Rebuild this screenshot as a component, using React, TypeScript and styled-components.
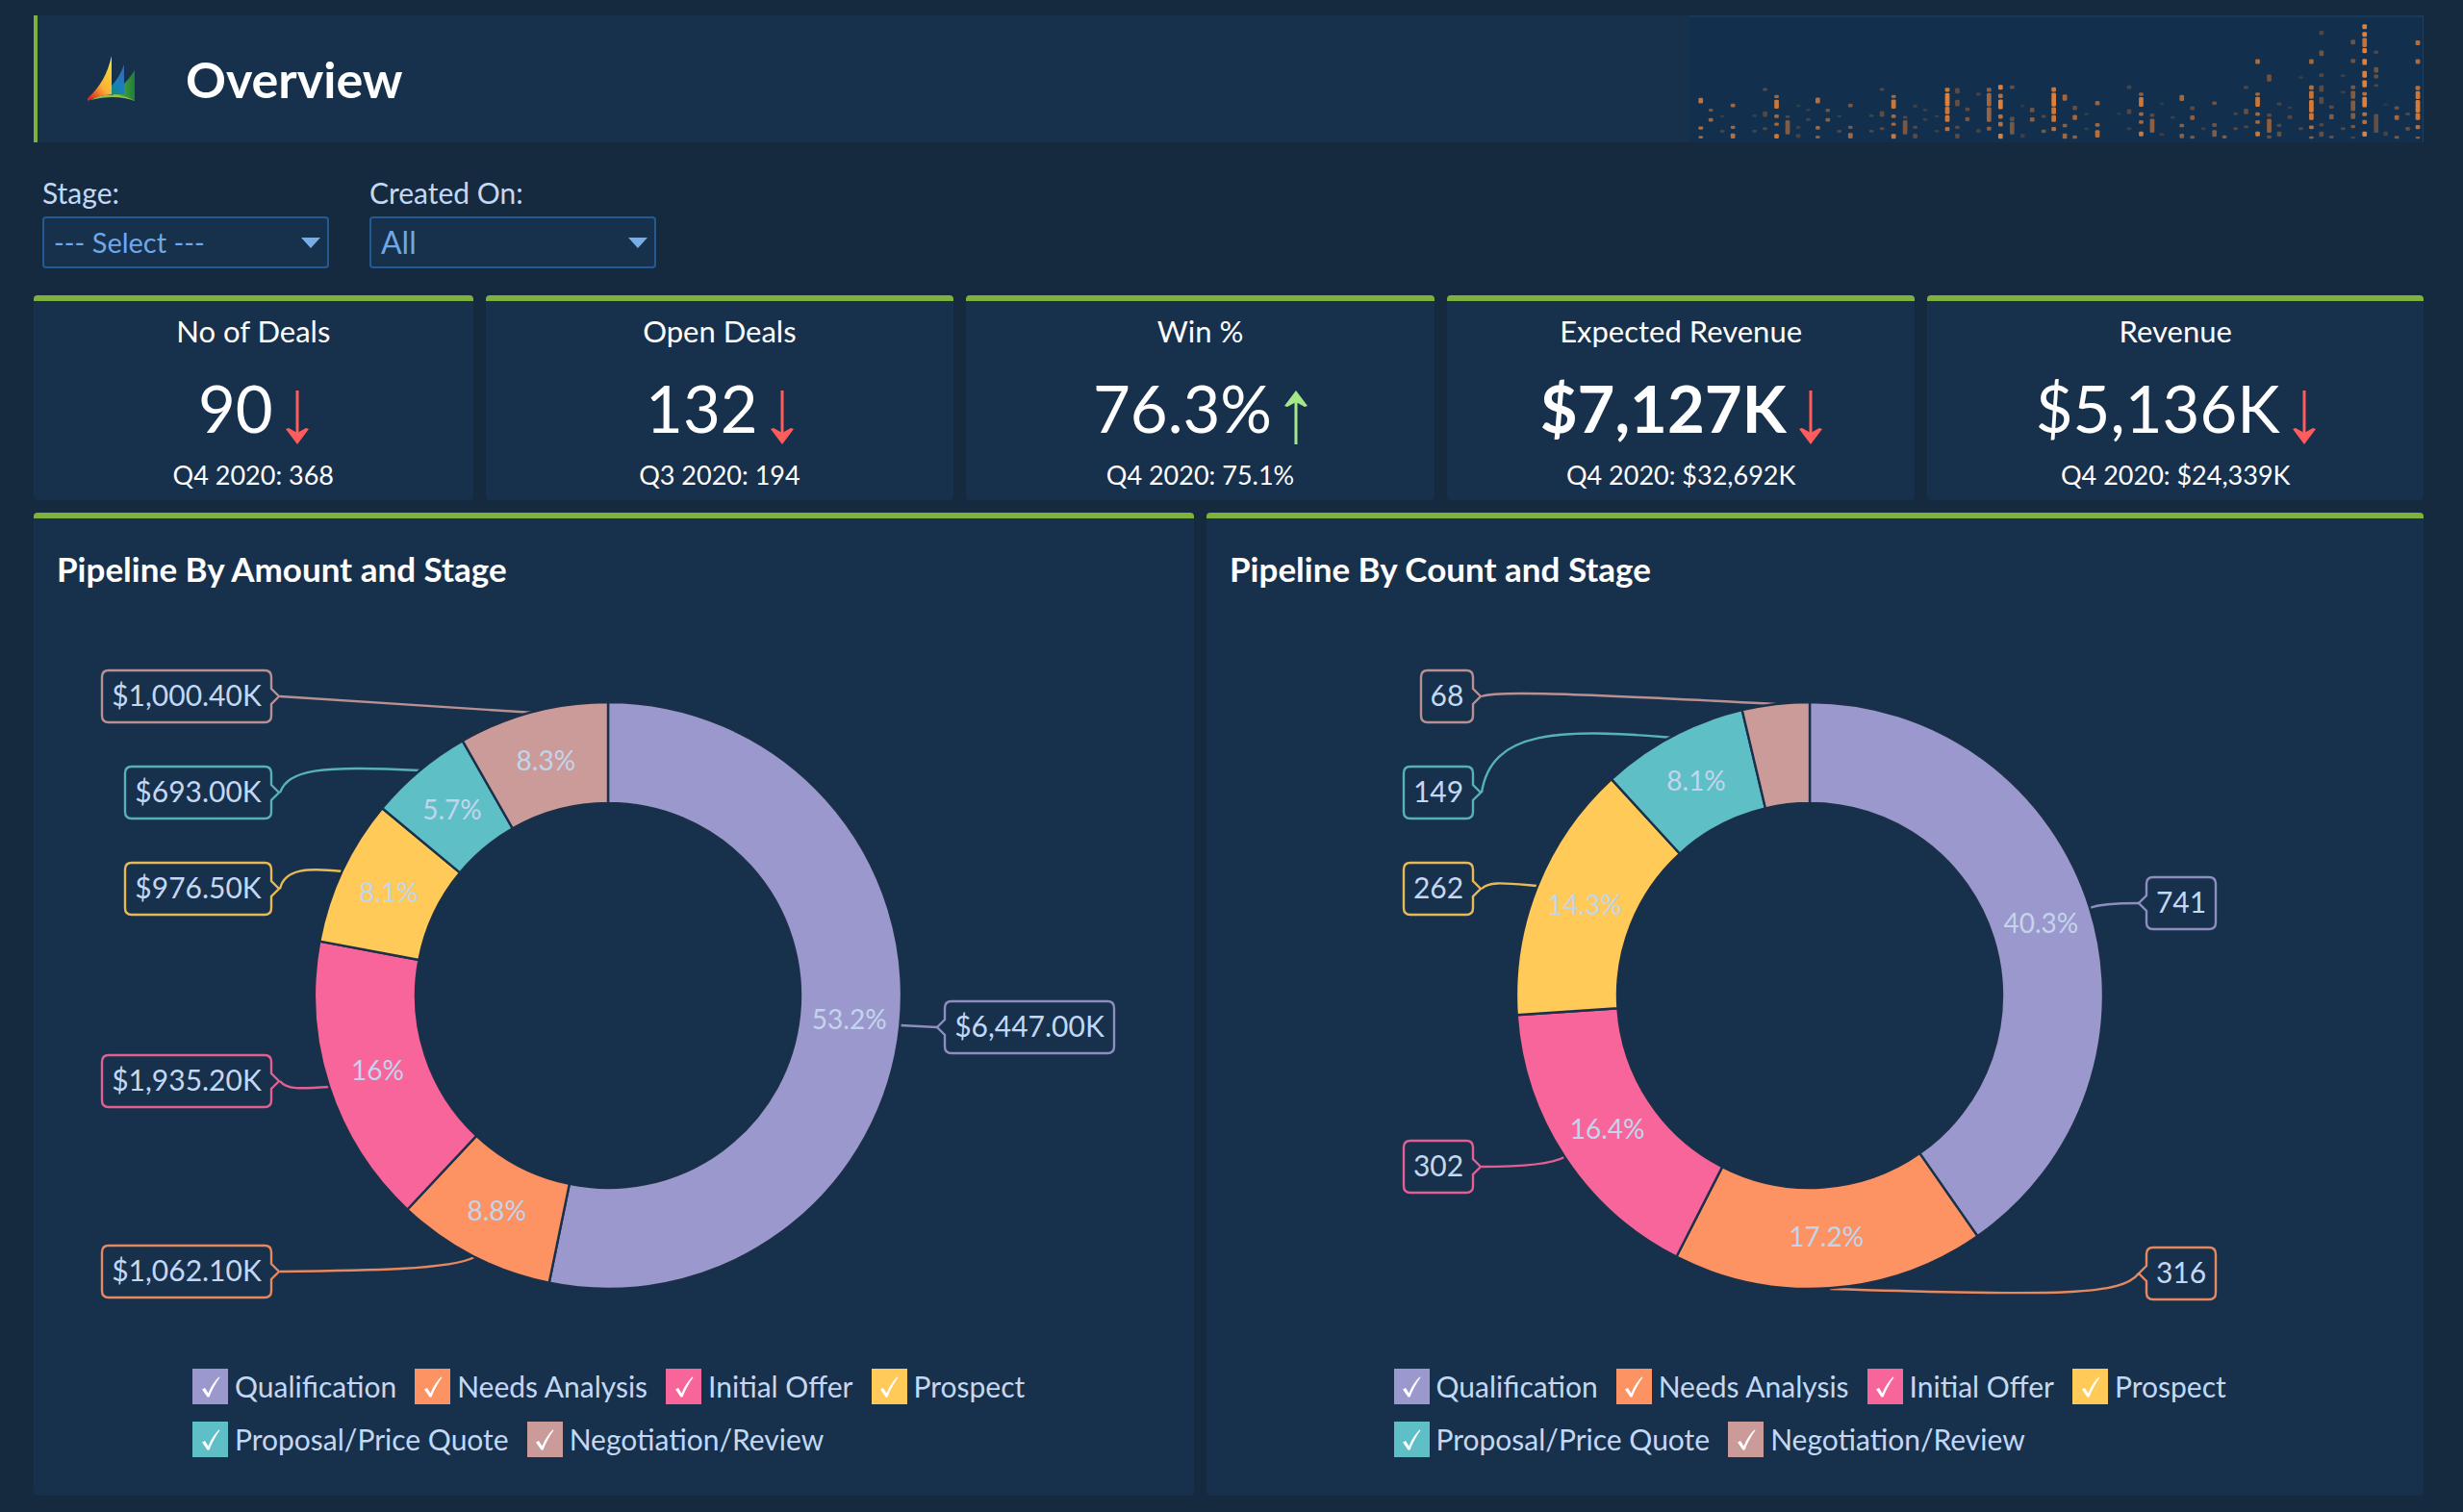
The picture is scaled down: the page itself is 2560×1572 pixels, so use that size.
import React from "react";
import styled, { createGlobalStyle } from "styled-components";

const c = {
  page: "#15293f",
  panel: "#17304b",
  art: "#12304d",
  green: "#7eb23d",
  text: "#ffffff",
  soft: "#c3d8f5",
  blue: "#6fa8e6",
  border: "#245a94",
  down: "#ff5c5c",
  up: "#a5e887",
};

const Global = createGlobalStyle`
  * { box-sizing: border-box; }
  body { margin: 0; background: ${c.page}; font-family: Lato, "Liberation Sans", sans-serif; color: ${c.text}; }
  h1, h2, p { margin: 0; }
`;

const Page = styled.div`
  min-height: 100vh;
  padding: 16px 41px 16px 35px;
  display: flex;
  flex-direction: column;
`;

/* ---------- header ---------- */

const Header = styled.header`
  display: flex;
  align-items: center;
  height: 132px;
  background: ${c.panel};
  border-left: 4px solid ${c.green};
`;
const Logo = styled.svg`
  width: 50px;
  height: 48px;
  margin-left: 52px;
  flex: none;
`;
const PageTitle = styled.h1`
  margin-left: 52px;
  font-size: 52px;
  line-height: 64px;
  font-weight: 700;
`;
const HeaderArt = styled.svg`
  margin-left: auto;
  width: 763px;
  height: 132px;
  flex: none;
  background: ${c.art};
  border-top: 2px solid #1b3854;
  border-right: 1px solid #1f3f5e;
`;

/* ---------- filters ---------- */

const Filters = styled.form`
  display: flex;
  gap: 42px;
  padding: 36px 9px 28px;
`;
const Field = styled.div`
  display: flex;
  flex-direction: column;
  gap: 9px;
  width: 298px;
`;
const FieldLabel = styled.label`
  font-size: 30px;
  line-height: 32px;
  color: ${c.soft};
`;
const SelectBox = styled.div`
  display: grid;
  align-items: center;
  > * { grid-area: 1 / 1; }
`;
const Select = styled.select<{ $size: number }>`
  appearance: none;
  width: 100%;
  height: 54px;
  padding: 0 40px 2px 10px;
  border: 2px solid ${c.border};
  border-radius: 4px;
  background: ${c.panel};
  color: ${c.blue};
  font-family: inherit;
  font-size: ${(p) => p.$size}px;
`;
const Caret = styled.svg`
  justify-self: end;
  width: 20px;
  height: 11px;
  margin-right: 9px;
  pointer-events: none;
`;

/* ---------- cards ---------- */

const Card = styled.section`
  background: ${c.panel};
  border-top: 6px solid ${c.green};
  border-radius: 4px;
  min-width: 0;
`;
const KpiRow = styled.div`
  display: grid;
  grid-template-columns: 457fr 487fr 487fr 487fr 516fr;
  gap: 13px;
  margin-bottom: 13px;
`;
const Kpi = styled(Card)`
  height: 213px;
  padding-top: 11px;
  display: flex;
  flex-direction: column;
  align-items: center;
`;
const KpiTitle = styled.h2`
  font-size: 31px;
  line-height: 40px;
  font-weight: 400;
`;
const KpiValue = styled.p<{ $bold?: boolean }>`
  display: flex;
  gap: 13px;
  margin-top: 20px;
  font-size: 67px;
  line-height: 80px;
  font-weight: ${(p) => (p.$bold ? 700 : 400)};
`;
const Arrow = styled.svg`
  width: 24px;
  height: 56px;
  margin-top: 22px;
  flex: none;
`;
const KpiNote = styled.p`
  margin-top: 14px;
  font-size: 27px;
  line-height: 32px;
`;

/* ---------- charts ---------- */

const ChartRow = styled.div`
  display: grid;
  grid-template-columns: 1206fr 1265fr;
  gap: 13px;
`;
const ChartCard = styled(Card)`
  padding: 32px 0 40px;
`;
const ChartTitle = styled.h2`
  padding: 0 24px;
  font-size: 35px;
  line-height: 40px;
  font-weight: 700;
`;
const Plot = styled.svg`
  display: block;
  width: 100%;
  height: auto;
  font-family: Lato, "Liberation Sans", sans-serif;
`;
const CalloutText = styled.text`
  font-size: 30px;
  fill: ${c.soft};
`;
const ShareText = styled.text`
  font-size: 28px;
  text-anchor: middle;
  fill: #c3d5ec;
`;
const Legend = styled.div`
  display: flex;
  flex-wrap: wrap;
  gap: 18px 19px;
  width: 876px;
  max-width: 100%;
  margin: 22px auto 0;
`;
const LegendItem = styled.label`
  display: flex;
  align-items: center;
  gap: 7px;
  font-size: 30px;
  line-height: 37px;
  color: ${c.soft};
`;
const Tick = styled.span`
  display: grid;
  place-items: center;
  > * { grid-area: 1 / 1; }
  svg { width: 20px; height: 22px; pointer-events: none; }
`;
const TickBox = styled.input<{ $color: string }>`
  appearance: none;
  width: 37px;
  height: 37px;
  margin: 0;
  background: ${(p) => p.$color};
`;

/* ---------- data ---------- */

const stages = [
  { name: "Qualification", color: "#9b98cd" },
  { name: "Needs Analysis", color: "#fd9263" },
  { name: "Initial Offer", color: "#f8659b" },
  { name: "Prospect", color: "#ffca57" },
  { name: "Proposal/Price Quote", color: "#5fbfc6" },
  { name: "Negotiation/Review", color: "#cb9b9a" },
];

type Slice = { value: number; label: string; share?: string; box: number; y: number; side: 1 | -1; line: string };

const amount: Slice[] = [
  { value: 6447, label: "$6,447.00K", share: "53.2%", box: 176, y: 33, side: 1, line: "M342 33L304 31" },
  { value: 1062.1, label: "$1,062.10K", share: "8.8%", box: 176, y: 287, side: -1, line: "M-341 287C-252 286 -162 285 -139 272" },
  { value: 1935.2, label: "$1,935.20K", share: "16%", box: 176, y: 89, side: -1, line: "M-341 89C-334 98 -320 97 -289 95" },
  { value: 976.5, label: "$976.50K", share: "8.1%", box: 152, y: -111, side: -1, line: "M-341 -111C-336 -132 -312 -133 -276 -129" },
  { value: 693, label: "$693.00K", share: "5.7%", box: 152, y: -211, side: -1, line: "M-341 -211C-332 -234 -302 -240 -196 -234" },
  { value: 1000.4, label: "$1,000.40K", share: "8.3%", box: 176, y: -311, side: -1, line: "M-341 -311L-77 -294" },
];

const count: Slice[] = [
  { value: 741, label: "741", share: "40.3%", box: 72, y: -96, side: 1, line: "M342 -96C319 -96 301 -95 291 -91" },
  { value: 316, label: "316", share: "17.2%", box: 72, y: 289, side: 1, line: "M342 289C324 311 269 313 21 305" },
  { value: 302, label: "302", share: "16.4%", box: 72, y: 178, side: -1, line: "M-341 178C-306 178 -269 176 -255 168" },
  { value: 262, label: "262", share: "14.3%", box: 72, y: -111, side: -1, line: "M-341 -111C-333 -119 -319 -117 -283 -114" },
  { value: 149, label: "149", share: "8.1%", box: 72, y: -211, side: -1, line: "M-341 -211C-331 -276 -261 -278 -142 -268" },
  { value: 68, label: "68", box: 54, y: -311, side: -1, line: "M-341 -311C-329 -316 -281 -316 -35 -303" },
];

const kpis = [
  { title: "No of Deals", value: "90", note: "Q4 2020: 368", up: false },
  { title: "Open Deals", value: "132", note: "Q3 2020: 194", up: false },
  { title: "Win %", value: "76.3%", note: "Q4 2020: 75.1%", up: true },
  { title: "Expected Revenue", value: "$7,127K", note: "Q4 2020: $32,692K", up: false, bold: true },
  { title: "Revenue", value: "$5,136K", note: "Q4 2020: $24,339K", up: false },
];

/* Header art: each entry is [x, top, bottom, opacity] of one vertical run of dots. */
const runs: [number, number, number, number][] = [
  [52, 303, 316, 0.85], [52, 392, 398, 0.8], [52, 422, 426, 0.7],
  [72, 337, 342, 0.5], [72, 366, 373, 0.7], [95, 357, 360, 0.2], [95, 403, 408, 0.25],
  [116, 321, 328, 0.7], [116, 390, 396, 0.7], [116, 414, 426, 0.8],
  [159, 355, 359, 0.2], [159, 403, 407, 0.25], [180, 272, 277, 0.35], [180, 345, 358, 0.3], [180, 395, 400, 0.3],
  [203, 294, 300, 0.7], [203, 309, 333, 0.9], [203, 355, 362, 0.7], [203, 380, 386, 0.7], [203, 416, 426, 0.9],
  [225, 358, 362, 0.3], [225, 373, 413, 0.55], [246, 324, 328, 0.15], [246, 390, 396, 0.2], [246, 416, 424, 0.25],
  [266, 337, 340, 0.2], [266, 366, 371, 0.25],
  [285, 302, 316, 0.8], [285, 391, 398, 0.7], [285, 421, 426, 0.6],
  [305, 337, 343, 0.45], [305, 366, 373, 0.6], [328, 357, 360, 0.2], [328, 403, 408, 0.3],
  [350, 321, 328, 0.5], [350, 390, 396, 0.5], [350, 413, 426, 0.7],
  [392, 355, 359, 0.25], [392, 403, 407, 0.3], [413, 272, 277, 0.3], [413, 344, 358, 0.35], [413, 395, 400, 0.35],
  [436, 294, 300, 0.7], [436, 308, 333, 0.9], [436, 355, 362, 0.7], [436, 380, 386, 0.7], [436, 416, 427, 0.9],
  [459, 359, 364, 0.3], [459, 373, 413, 0.5], [479, 324, 330, 0.2], [479, 390, 396, 0.3], [479, 415, 426, 0.35],
  [499, 337, 341, 0.2], [499, 366, 371, 0.2], [522, 357, 360, 0.2], [522, 403, 407, 0.2],
  [543, 271, 280, 0.9], [543, 288, 325, 1], [543, 331, 350, 0.9], [543, 357, 374, 0.9], [543, 394, 403, 0.8],
  [563, 272, 285, 0.35], [563, 309, 325, 0.4], [563, 390, 396, 0.35], [563, 415, 426, 0.35],
  [583, 333, 340, 0.35], [583, 363, 372, 0.5], [605, 286, 292, 0.25], [605, 401, 408, 0.25],
  [626, 271, 280, 0.6], [626, 288, 325, 0.7], [626, 332, 374, 0.65], [626, 393, 401, 0.6],
  [649, 262, 273, 1], [649, 290, 300, 0.8], [649, 308, 334, 1], [649, 355, 364, 0.8], [649, 378, 388, 0.8], [649, 415, 427, 1],
  [672, 264, 271, 0.4], [672, 362, 372, 0.4], [672, 378, 413, 0.5], [693, 324, 328, 0.15], [693, 415, 424, 0.2],
  [712, 334, 344, 0.45], [712, 364, 373, 0.6], [735, 356, 361, 0.3], [735, 402, 409, 0.5],
  [755, 270, 280, 0.9], [755, 287, 326, 1], [755, 332, 350, 0.9], [755, 357, 374, 0.9], [755, 394, 403, 0.8],
  [777, 292, 308, 0.7], [777, 384, 391, 0.6], [777, 414, 427, 0.7],
  [797, 328, 337, 0.4], [797, 356, 368, 0.7], [797, 420, 427, 0.6], [820, 350, 353, 0.2], [820, 396, 400, 0.2],
  [842, 313, 322, 0.65], [842, 382, 389, 0.7], [842, 404, 423, 0.8],
  [885, 349, 352, 0.15], [905, 264, 271, 0.25], [905, 338, 350, 0.3], [905, 395, 400, 0.2],
  [929, 286, 293, 0.6], [929, 301, 327, 0.9], [929, 348, 355, 0.7], [929, 373, 380, 0.7], [929, 408, 419, 0.9],
  [951, 352, 358, 0.35], [951, 368, 408, 0.6], [970, 317, 321, 0.15], [970, 413, 418, 0.2], [992, 360, 364, 0.2],
  [1010, 294, 309, 0.7], [1010, 384, 391, 0.6], [1010, 415, 425, 0.6],
  [1031, 329, 337, 0.35], [1031, 358, 368, 0.6], [1031, 421, 427, 0.5], [1053, 395, 400, 0.2],
  [1075, 314, 321, 0.45], [1075, 382, 390, 0.45], [1075, 404, 421, 0.55], [1095, 420, 426, 0.55],
  [1117, 348, 353, 0.25], [1117, 395, 400, 0.3], [1138, 265, 271, 0.3], [1138, 337, 350, 0.4], [1138, 389, 394, 0.3],
  [1161, 182, 193, 0.75], [1161, 286, 292, 0.7], [1161, 300, 327, 0.9], [1161, 348, 355, 0.7], [1161, 373, 380, 0.7], [1161, 408, 419, 0.9],
  [1184, 230, 248, 0.45], [1184, 352, 358, 0.35], [1184, 368, 408, 0.6], [1184, 420, 426, 0.4],
  [1204, 317, 323, 0.25], [1204, 384, 390, 0.3], [1204, 408, 420, 0.4], [1225, 330, 333, 0.2], [1225, 357, 365, 0.3],
  [1247, 235, 239, 0.2], [1247, 395, 400, 0.3],
  [1268, 182, 193, 0.7], [1268, 264, 273, 0.8], [1268, 281, 302, 0.85], [1268, 310, 344, 0.95], [1268, 350, 368, 0.9], [1268, 389, 397, 0.8], [1268, 423, 427, 0.6],
  [1288, 93, 102, 0.3], [1288, 155, 168, 0.45], [1288, 226, 234, 0.3], [1288, 264, 280, 0.35], [1288, 300, 318, 0.35], [1288, 382, 388, 0.3], [1288, 408, 421, 0.4],
  [1308, 326, 333, 0.35], [1308, 354, 366, 0.55], [1308, 421, 426, 0.4], [1331, 229, 234, 0.2], [1331, 280, 285, 0.2], [1331, 395, 400, 0.3],
  [1351, 121, 132, 0.45], [1351, 181, 190, 0.45], [1351, 264, 272, 0.5], [1351, 281, 302, 0.55], [1351, 311, 340, 0.55], [1351, 350, 365, 0.55], [1351, 388, 394, 0.5], [1351, 424, 427, 0.3],
  [1374, 73, 84, 1], [1374, 97, 108, 1], [1374, 116, 140, 0.85], [1374, 147, 159, 1], [1374, 181, 196, 1], [1374, 219, 236, 1], [1374, 248, 266, 1],
  [1374, 285, 292, 0.8], [1374, 300, 328, 1], [1374, 348, 356, 0.8], [1374, 372, 381, 0.8], [1374, 408, 420, 1],
  [1397, 155, 161, 0.3], [1397, 207, 220, 0.45], [1397, 230, 238, 0.4], [1397, 260, 264, 0.3], [1397, 353, 408, 0.4], [1416, 320, 323, 0.15], [1416, 408, 418, 0.25],
  [1438, 329, 336, 0.45], [1438, 357, 368, 0.7], [1438, 422, 427, 0.5], [1460, 349, 354, 0.3], [1460, 394, 401, 0.4],
  [1480, 123, 134, 0.8], [1480, 182, 193, 0.75], [1480, 265, 275, 0.8], [1480, 282, 303, 0.9], [1480, 310, 345, 0.95], [1480, 350, 368, 0.9], [1480, 388, 397, 0.8], [1480, 424, 427, 0.6],
];

/* ---------- parts ---------- */

const OUTER = 305;
const INNER = 200;

const polar = (r: number, a: number) => [r * Math.sin(a), -r * Math.cos(a)];

function arc(a0: number, a1: number) {
  const big = a1 - a0 > Math.PI ? 1 : 0;
  const [x0, y0] = polar(OUTER, a0);
  const [x1, y1] = polar(OUTER, a1);
  const [x2, y2] = polar(INNER, a1);
  const [x3, y3] = polar(INNER, a0);
  return `M${x0} ${y0}A${OUTER} ${OUTER} 0 ${big} 1 ${x1} ${y1}L${x2} ${y2}A${INNER} ${INNER} 0 ${big} 0 ${x3} ${y3}Z`;
}

function Callout({ slice, color }: { slice: Slice; color: string }) {
  const s = slice.side;
  const near = 350 * s;
  const far = near + slice.box * s;
  const y = slice.y;
  const d =
    `M${near - 8 * s} ${y}L${near} ${y - 8}V${y - 20}Q${near} ${y - 27} ${near + 7 * s} ${y - 27}` +
    `H${far - 7 * s}Q${far} ${y - 27} ${far} ${y - 20}V${y + 20}Q${far} ${y + 27} ${far - 7 * s} ${y + 27}` +
    `H${near + 7 * s}Q${near} ${y + 27} ${near} ${y + 20}V${y + 8}Z`;
  return (
    <g>
      <path d={slice.line} fill="none" stroke={color} strokeWidth={2.4} opacity={0.9} />
      <path d={d} fill="none" stroke={color} strokeWidth={2.4} opacity={0.9} />
      <CalloutText x={(near + far) / 2} y={y + 10} textAnchor="middle">
        {slice.label}
      </CalloutText>
    </g>
  );
}

function Donut({ slices, left, width, title }: { slices: Slice[]; left: number; width: number; title: string }) {
  const total = slices.reduce((sum, s) => sum + s.value, 0);
  let at = 0;
  const parts = slices.map((s, i) => {
    const a0 = at;
    at += (s.value / total) * Math.PI * 2;
    const [mx, my] = polar(252, (a0 + at) / 2);
    return { s, color: stages[i].color, d: arc(a0, at), mx, my };
  });
  return (
    <Plot viewBox={`${left} -424 ${width} 790`} role="img" aria-label={title}>
      {parts.map((p) => (
        <Callout key={p.s.label} slice={p.s} color={p.color} />
      ))}
      {parts.map((p) => (
        <path key={p.s.label} d={p.d} fill={p.color} stroke="#1b3049" strokeWidth={2.4} />
      ))}
      {parts.map((p) =>
        p.s.share ? (
          <ShareText key={p.s.label} x={p.mx} y={p.my + 10}>
            {p.s.share}
          </ShareText>
        ) : null,
      )}
    </Plot>
  );
}

function StageLegend() {
  return (
    <Legend>
      {stages.map((s) => (
        <LegendItem key={s.name}>
          <Tick>
            <TickBox type="checkbox" defaultChecked $color={s.color} />
            <svg viewBox="0 0 20 22">
              <path d="M1 13.5L4 12L7.500 17.500C10.500 10 14 5 18.500 0.500L19.500 1C15 7.500 11.500 13.500 8.500 21.500L6.500 21.500Z" fill="#fff" />
            </svg>
          </Tick>
          {s.name}
        </LegendItem>
      ))}
    </Legend>
  );
}

function Trend({ up }: { up: boolean }) {
  return (
    <Arrow viewBox="0 0 24 56" aria-hidden="true">
      <g transform={up ? "rotate(180 12 28)" : undefined}>
        <path d="M12 0V48" stroke={up ? c.up : c.down} strokeWidth={3} />
        <path d="M0 40L3 39L12 44L21 39L24 40L12 56Z" fill={up ? c.up : c.down} />
      </g>
    </Arrow>
  );
}

function SelectField({ id, label, options, size }: { id: string; label: string; options: string[]; size: number }) {
  return (
    <Field>
      <FieldLabel htmlFor={id}>{label}</FieldLabel>
      <SelectBox>
        <Select id={id} $size={size}>
          {options.map((o) => (
            <option key={o}>{o}</option>
          ))}
        </Select>
        <Caret viewBox="0 0 20 11">
          <path d="M0 0H20L10 11Z" fill="#78aee8" />
        </Caret>
      </SelectBox>
    </Field>
  );
}

export default function App() {
  return (
    <>
      <Global />
      <Page>
        <Header>
          <Logo viewBox="0 0 50 48" aria-hidden="true">
            <defs>
              <linearGradient id="sail" x1="0.7" y1="0" x2="0.1" y2="1">
                <stop offset="0" stopColor="#f3dc3a" />
                <stop offset="0.55" stopColor="#fbb034" />
                <stop offset="0.95" stopColor="#e0261c" />
              </linearGradient>
              <linearGradient id="mid" x1="0.8" y1="0" x2="0.2" y2="1">
                <stop offset="0" stopColor="#3a68a8" />
                <stop offset="0.6" stopColor="#1b7fc0" />
                <stop offset="1" stopColor="#0f8a80" />
              </linearGradient>
              <linearGradient id="leaf" x1="1" y1="0" x2="0" y2="0">
                <stop offset="0" stopColor="#1f7f35" />
                <stop offset="0.6" stopColor="#3f9e3f" />
                <stop offset="1" stopColor="#8cc152" />
              </linearGradient>
            </defs>
            <path d="M49 15C45 21 42 25 38 29V39H27V42C36 42 43 44 49 47Z" fill="url(#leaf)" />
            <path d="M38 9C35 18 30 26 25 31V40H38Z" fill="url(#mid)" />
            <path d="M25 0C21 18 13 33 0 44V47C8 43 17 41 25 40Z" fill="url(#sail)" />
            <path d="M3 46C18 38 36 39 49 47C36 42 20 42 3 46Z" fill="#8cc152" />
          </Logo>
          <PageTitle>Overview</PageTitle>
          <HeaderArt viewBox="30 49 1460 391" preserveAspectRatio="none" aria-hidden="true">
            {runs.map(([x, y0, y1, o]) => (
              <rect key={`${x}-${y0}`} x={x - 4} y={y0 - 2} width={9} height={y1 - y0 + 4} rx={3} fill="#e07f38" opacity={o} />
            ))}
          </HeaderArt>
        </Header>

        <Filters>
          <SelectField id="stage" label="Stage:" size={29} options={["--- Select ---", ...stages.map((s) => s.name)]} />
          <SelectField id="created" label="Created On:" size={32} options={["All"]} />
        </Filters>

        <KpiRow>
          {kpis.map((k) => (
            <Kpi key={k.title}>
              <KpiTitle>{k.title}</KpiTitle>
              <KpiValue $bold={k.bold}>
                {k.value}
                <Trend up={k.up} />
              </KpiValue>
              <KpiNote>{k.note}</KpiNote>
            </Kpi>
          ))}
        </KpiRow>

        <ChartRow>
          <ChartCard>
            <ChartTitle>Pipeline By Amount and Stage</ChartTitle>
            <Donut slices={amount} left={-597} width={1206} title="Pipeline by amount and stage" />
            <StageLegend />
          </ChartCard>
          <ChartCard>
            <ChartTitle>Pipeline By Count and Stage</ChartTitle>
            <Donut slices={count} left={-627} width={1265} title="Pipeline by count and stage" />
            <StageLegend />
          </ChartCard>
        </ChartRow>
      </Page>
    </>
  );
}
